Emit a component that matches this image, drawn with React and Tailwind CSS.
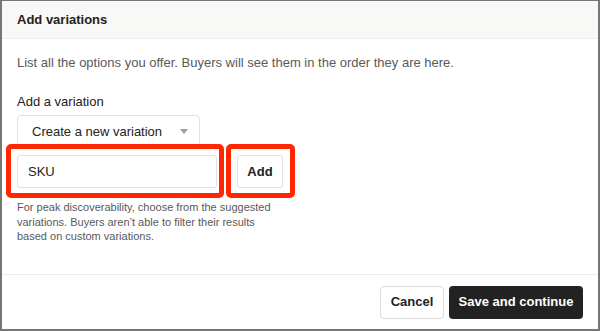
export default function App() {
  return (
    <div className="w-[600px] h-[331px] bg-white border-t border-l-2 border-r-2 border-b-2 border-[#767676] flex flex-col font-['Liberation_Sans',Arial,sans-serif]">
      <div className="h-[38px] shrink-0 bg-[#f8f8f7] border-b border-[#ececec] flex items-center px-[15px]">
        <h2 className="text-[13px] font-bold text-[#222]">Add variations</h2>
      </div>

      <div className="flex-1 px-[15px] pt-[15px]">
        <p className="text-[13px] leading-[18px] text-[#595959]">
          List all the options you offer. Buyers will see them in the order they are here.
        </p>

        <label className="block mt-[21px] text-[13px] leading-[18px] text-[#222]">
          Add a variation
        </label>

        <div className="mt-[4px] w-[183px] h-[33px] border border-[#e1e1e1] rounded-[4px] flex items-center justify-between pl-[14px] pr-[11px]">
          <span className="text-[13px] text-[#222]">Create a new variation</span>
          <span className="w-0 h-0 border-l-[4px] border-r-[4px] border-t-[5px] border-l-transparent border-r-transparent border-t-[#9a9a9a]" />
        </div>

        <div className="mt-[7px] flex gap-[20px]">
          <div className="relative">
            <input
              readOnly
              value="SKU"
              className="w-[200px] h-[33px] border border-[#e1e1e1] rounded-[3px] px-[10px] text-[13px] text-[#222] outline-none"
            />
            <div className="absolute -left-[11px] -top-[11px] -right-[7px] -bottom-[10px] border-[5px] border-[#ff2600] rounded-[5px] pointer-events-none" />
          </div>
          <div className="relative">
            <button className="w-[46px] h-[33px] border border-[#e1e1e1] rounded-[3px] text-[13px] font-bold text-[#222]">
              Add
            </button>
            <div className="absolute -left-[11px] -top-[11px] -right-[12px] -bottom-[10px] border-[5px] border-[#ff2600] rounded-[5px] pointer-events-none" />
          </div>
        </div>

        <p className="mt-[12px] w-[265px] text-[11px] leading-[14.5px] text-[#595959]">
          For peak discoverability, choose from the suggested variations. Buyers aren’t able to filter their results based on custom variations.
        </p>
      </div>

      <div className="h-[55px] shrink-0 border-t border-[#ececec] flex items-center justify-end gap-[5px] pr-[15px]">
        <button className="w-[64px] h-[33px] border border-[#dcdcdc] rounded-[4px] text-[13px] font-bold text-[#222]">
          Cancel
        </button>
        <button className="w-[134px] h-[33px] bg-[#222] rounded-[4px] text-[13px] font-bold text-white">
          Save and continue
        </button>
      </div>
    </div>
  );
}
